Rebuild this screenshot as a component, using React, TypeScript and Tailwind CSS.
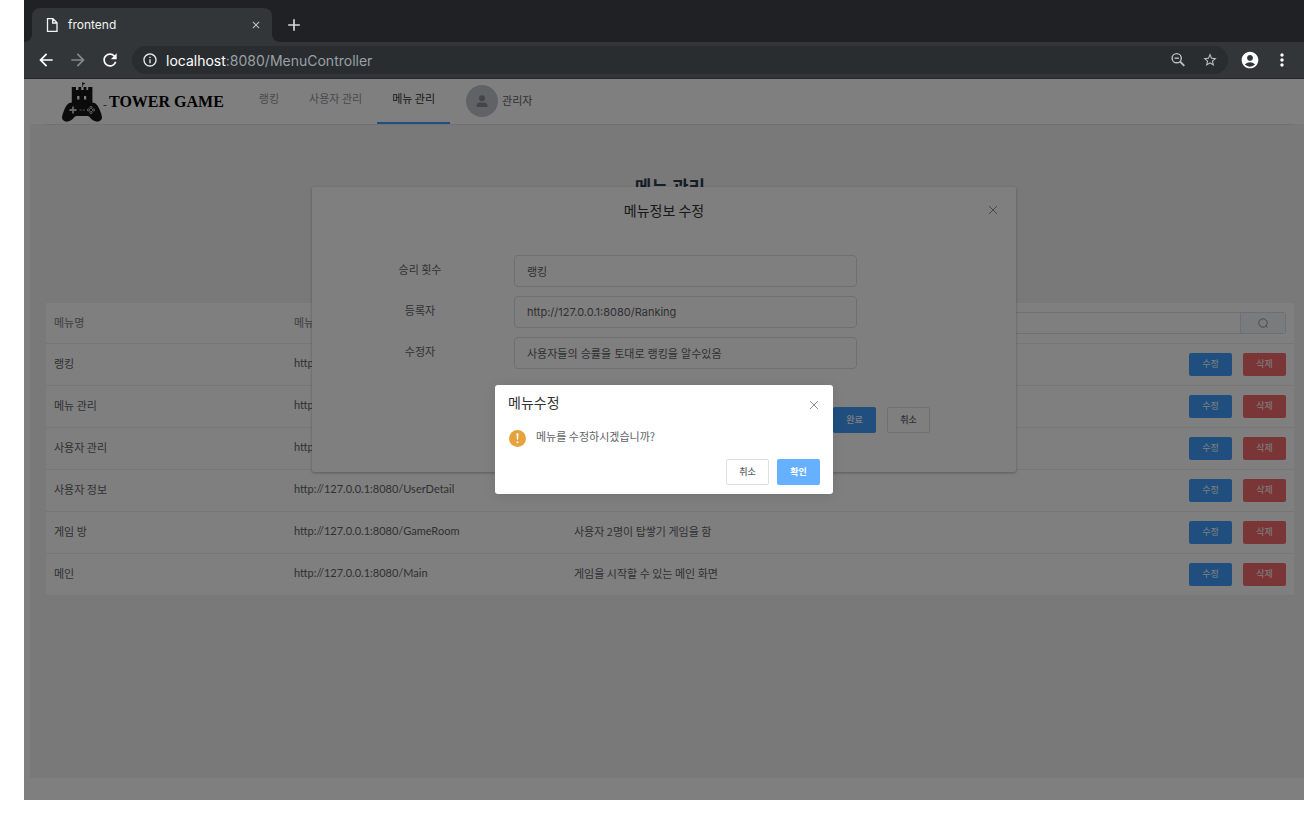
import React from "react";
import {
  MdAccountCircle,
  MdAdd,
  MdArrowBack,
  MdArrowForward,
  MdClose,
  MdInfoOutline,
  MdMoreVert,
  MdRefresh,
  MdStarBorder,
} from "react-icons/md";

const menus = [
  { name: "랭킹", path: "Ranking", note: "사용자들의 승률을 토대로 랭킹을 알수있음" },
  { name: "메뉴 관리", path: "MenuController", note: "" },
  { name: "사용자 관리", path: "UserController", note: "" },
  { name: "사용자 정보", path: "UserDetail", note: "" },
  { name: "게임 방", path: "GameRoom", note: "사용자 2명이 탑쌓기 게임을 함" },
  { name: "메인", path: "Main", note: "게임을 시작할 수 있는 메인 화면" },
];

const fields = [
  { id: "menu-name", label: "승리 횟수", value: "랭킹" },
  { id: "menu-url", label: "등록자", value: "http://127.0.0.1:8080/Ranking" },
  { id: "menu-note", label: "수정자", value: "사용자들의 승률을 토대로 랭킹을 알수있음" },
];

function Browser() {
  return (
    <div className="font-['Inter','Noto_Sans_CJK_KR',sans-serif]">
      <div className="flex h-[42px] items-end bg-[#202124] pl-2">
        <div className="relative flex h-[34px] w-60 items-center rounded-t-lg bg-[#323639] pr-2.5 pl-3 text-[12px] text-[#f1f3f4]">
          <svg className="mr-2 size-4" viewBox="0 0 16 16" fill="none" stroke="currentColor" strokeWidth="1.3">
            <path d="M3.500 1.700h5.500l4 4v8.600H3.500zM8.700 1.700V6H13" />
          </svg>
          <span className="flex-1">frontend</span>
          <button aria-label="Close tab" className="text-[#c3c5c7]">
            <MdClose className="size-3" />
          </button>
          <svg className="absolute bottom-0 -left-2 size-2" viewBox="0 0 8 8">
            <path d="M8 0v8H0a8 8 0 0 0 8-8z" fill="#323639" />
          </svg>
          <svg className="absolute -right-2 bottom-0 size-2" viewBox="0 0 8 8">
            <path d="M0 0v8h8a8 8 0 0 1-8-8z" fill="#323639" />
          </svg>
        </div>
        <button aria-label="New tab" className="ml-3 flex h-[34px] items-center text-[#d5d7d9]">
          <MdAdd className="size-5" />
        </button>
      </div>
      <div className="flex h-[37px] items-center border-b border-[#25282a] bg-[#323639] pr-3 pl-3 text-white">
        <button aria-label="Back" className="mr-3">
          <MdArrowBack className="size-5" />
        </button>
        <button aria-label="Forward" className="mr-3 text-[#85888a]">
          <MdArrowForward className="size-5" />
        </button>
        <button aria-label="Reload" className="mr-3">
          <MdRefresh className="size-5" />
        </button>
        <div className="flex h-7 flex-1 items-center rounded-full bg-[#292d30] pr-2.5 pl-2.5 text-[14px] text-[#9aa0a6]">
          <MdInfoOutline className="mr-2 size-4 text-[#e8eaed]" />
          <span className="flex-1">
            <span className="text-white">localhost</span>:8080/MenuController
          </span>
          <button aria-label="Zoom" className="mr-4 text-[#bdc1c6]">
            <svg className="size-4" viewBox="0 0 16 16" fill="none" stroke="currentColor" strokeWidth="1.4">
              <circle cx="6.700" cy="6.200" r="4.600" />
              <path d="M4.500 6.200h4.400" />
              <path d="M10 9.500l4.300 4.300" strokeWidth="1.800" />
            </svg>
          </button>
          <button aria-label="Bookmark" className="text-[#bdc1c6]">
            <MdStarBorder className="size-4" />
          </button>
        </div>
        <button aria-label="Profile" className="ml-3">
          <MdAccountCircle className="size-5" />
        </button>
        <button aria-label="Menu" className="ml-3">
          <MdMoreVert className="size-5" />
        </button>
      </div>
    </div>
  );
}

function Logo() {
  return (
    <svg className="h-10 w-[45px]" viewBox="0 0 45 40">
      <path d="M20.500 5V.5M20.500 .8l2.500 .8-2.500 .8" stroke="#222" strokeWidth=".7" fill="#222" />
      <path
        fill="#161616"
        fillRule="evenodd"
        d="M9.800 5h4.200v3h2.400v-3h2.800v3h2.400v-3h2.800v3h1.800v-3h4.200V22H9.800zM15.200 14v3.500h2.200v-3.500zM22 14v3.500h2.200v-3.500z"
      />
      <path
        fill="#161616"
        d="M10 20.500h20c4 0 6 3 8 8 1.500 4 3 7.500 1 9.500-3.500 3.500-8 1-11-2.500-1-1.200-2-1.500-3-1.500H15c-1 0-2 .3-3 1.500-3 3.500-7.500 6-11 2.500-2-2-.5-5.500 1-9.500 2-5 4-8 8-8z"
      />
      <path d="M7.500 28h7M11 24.500v7" stroke="#ccc" strokeWidth="1.800" />
      <g fill="none" stroke="#ccc" strokeWidth="1">
        <circle cx="29" cy="25.500" r="1.100" />
        <circle cx="29" cy="30.500" r="1.100" />
        <circle cx="26.500" cy="28" r="1.100" />
        <circle cx="31.500" cy="28" r="1.100" />
      </g>
      <path d="M17.500 28h2M20.800 28h2" stroke="#aaa" />
      <path d="M41.500 23.500h3" stroke="#555" />
    </svg>
  );
}

function CloseIcon() {
  return (
    <svg className="size-2.5" viewBox="0 0 10 10" fill="none" stroke="currentColor">
      <path d="M1 1l8 8M9 1L1 9" />
    </svg>
  );
}

function Header() {
  return (
    <header className="flex h-[45px] items-start bg-white pl-8 text-[11px]">
      <a href="#main" className="flex items-center pt-[3px] text-black">
        <Logo />
        <span className="ml-0.5 font-['Liberation_Serif',serif] text-base font-bold">TOWER GAME</span>
      </a>
      <nav className="ml-5 flex h-[45px] text-[#909399]">
        <a href="#ranking" className="px-[15px] pt-[11px]">랭킹</a>
        <a href="#users" className="px-[15px] pt-[11px]">사용자 관리</a>
        <a href="#menus" className="border-b-2 border-[#409eff] px-[15px] pt-[11px] text-[#303133]">메뉴 관리</a>
      </nav>
      <div className="flex items-center gap-1 pt-1.5 pl-4 text-[#606266]">
        <span className="flex size-8 items-center justify-center rounded-full bg-[#c0c4cc]">
          <svg className="size-3" viewBox="0 0 12 12" fill="#888b91">
            <circle cx="6" cy="3.200" r="3" />
            <path d="M.5 12v-1.500C.5 8.500 2 7.500 4 7.500h4c2 0 3.500 1 3.500 3V12z" />
          </svg>
        </span>
        <span className="pb-0.5">관리자</span>
      </div>
    </header>
  );
}

function MenuTable() {
  return (
    <table className="w-full table-fixed border-collapse bg-white text-left text-[11px] text-[#606266]">
      <colgroup>
        <col className="w-60" />
        <col className="w-70" />
        <col className="w-70" />
        <col />
      </colgroup>
      <thead className="text-[#909399]">
        <tr className="h-10 border-b border-[#ebeef5]">
          <th className="px-2 pb-0.5 font-medium">메뉴명</th>
          <th className="px-2 pb-0.5 font-medium">메뉴 주소</th>
          <th className="px-2 pb-0.5 font-medium">메뉴 설명</th>
          <th className="px-2">
            <div className="flex h-[22px] rounded-[3px] border border-[#dcdfe6]">
              <input aria-label="검색" className="min-w-0 flex-1 px-3 outline-none" />
              <button
                aria-label="검색"
                className="flex w-[45px] items-center justify-center border-l border-[#dcdfe6] bg-[#f5f7fa] text-[#909399]"
              >
                <svg className="size-2.5" viewBox="0 0 10 10" fill="none" stroke="currentColor">
                  <circle cx="5" cy="5" r="4.200" />
                  <path d="M7.800 7.800l1.700 1.700" />
                </svg>
              </button>
            </div>
          </th>
        </tr>
      </thead>
      <tbody>
        {menus.map((menu) => (
          <tr key={menu.name} className="h-[42px] border-b border-[#ebeef5]">
            <td className="px-2 pb-0.5">{menu.name}</td>
            <td className="px-2 pb-0.5 font-['Lato',sans-serif]">http://127.0.0.1:8080/{menu.path}</td>
            <td className="px-2 pb-0.5">{menu.note}</td>
            <td className="px-2">
              <div className="flex justify-end gap-[11px] text-[9px] text-white">
                <button className="h-[23px] w-[43px] rounded-[2px] bg-[#409eff]">수정</button>
                <button className="h-[23px] w-[43px] rounded-[2px] bg-[#f56c6c]">삭제</button>
              </div>
            </td>
          </tr>
        ))}
      </tbody>
    </table>
  );
}

function EditDialog() {
  return (
    <section
      role="dialog"
      aria-labelledby="edit-title"
      className="absolute top-[108px] left-1/2 w-[55%] -translate-x-1/2 rounded-[2px] bg-white px-[18px] pb-[39px] text-[11px] text-[#606266] shadow-[0_1px_3px_rgba(0,0,0,0.3)]"
    >
      <div className="relative flex h-12 items-center justify-center">
        <h2 id="edit-title" className="pb-0.5 text-[14px] text-[#303133]">메뉴정보 수정</h2>
        <button aria-label="닫기" className="absolute right-0 pb-0.5 text-[#909399]">
          <CloseIcon />
        </button>
      </div>
      <div className="flex flex-col gap-[9px] pt-5">
        {fields.map((field) => (
          <div key={field.id} className="flex h-8 items-center">
            <label htmlFor={field.id} className="w-[180px] pb-1 text-center">{field.label}</label>
            <input
              id={field.id}
              defaultValue={field.value}
              className="mr-[141px] ml-1 h-8 min-w-0 flex-1 rounded border border-[#dcdfe6] px-3 font-['Inter','Noto_Sans_CJK_KR',sans-serif] outline-none"
            />
          </div>
        ))}
      </div>
      <div className="flex justify-end gap-[11px] pt-[38px] pr-[68px] text-[9px]">
        <button className="h-[26px] w-[43px] rounded-[2px] bg-[#409eff] font-medium text-white">완료</button>
        <button className="h-[26px] w-[43px] rounded-[2px] border border-[#dcdfe6] font-medium">취소</button>
      </div>
    </section>
  );
}

function ConfirmBox() {
  return (
    <section
      role="alertdialog"
      aria-labelledby="confirm-title"
      className="w-[338px] rounded-[3px] bg-white px-[13px] pb-[9px] text-[11px] text-[#606266] shadow-[0_2px_12px_rgba(0,0,0,0.1)]"
    >
      <div className="flex items-center justify-between pt-[7px]">
        <h2 id="confirm-title" className="text-[14px] text-[#303133]">메뉴수정</h2>
        <button aria-label="닫기" className="pt-1 pr-px text-[#909399]">
          <CloseIcon />
        </button>
      </div>
      <div className="flex items-center gap-2.5 pt-[15px] pb-2.5">
        <svg className="ml-px size-[17px]" viewBox="0 0 17 17">
          <circle cx="8.500" cy="8.500" r="8.500" fill="#e6a23c" />
          <path d="M7.500 4.200a1 1 0 0 1 2 0l-.5 5.600H8z" fill="#fff" />
          <circle cx="8.500" cy="12.300" r="1" fill="#fff" />
        </svg>
        <p className="pb-1">메뉴를 수정하시겠습니까?</p>
      </div>
      <div className="flex justify-end gap-2 text-[9px] font-medium">
        <button className="h-[26px] w-[43px] rounded-[2px] border border-[#dcdfe6]">취소</button>
        <button className="h-[26px] w-[43px] rounded-[2px] bg-[#66b1ff] font-bold text-white">확인</button>
      </div>
    </section>
  );
}

export default function App() {
  return (
    <div className="flex min-h-screen flex-col bg-white pb-7 pl-6 font-['Noto_Sans_CJK_KR',sans-serif]">
      <Browser />
      <div className="relative flex flex-1 flex-col bg-white pb-[22px] pl-1.5">
        <Header />
        <main className="flex-1 bg-[#f2f2f2] pr-2.5 pl-4">
          <h1 className="border-t border-[#e2e2e2] pt-12 pb-[103px] text-center text-[18px] font-bold text-[#2c3e50]">
            메뉴 관리
          </h1>
          <MenuTable />
        </main>
        <EditDialog />
        <div className="absolute inset-0 flex items-center justify-center bg-black/50">
          <ConfirmBox />
        </div>
      </div>
    </div>
  );
}
